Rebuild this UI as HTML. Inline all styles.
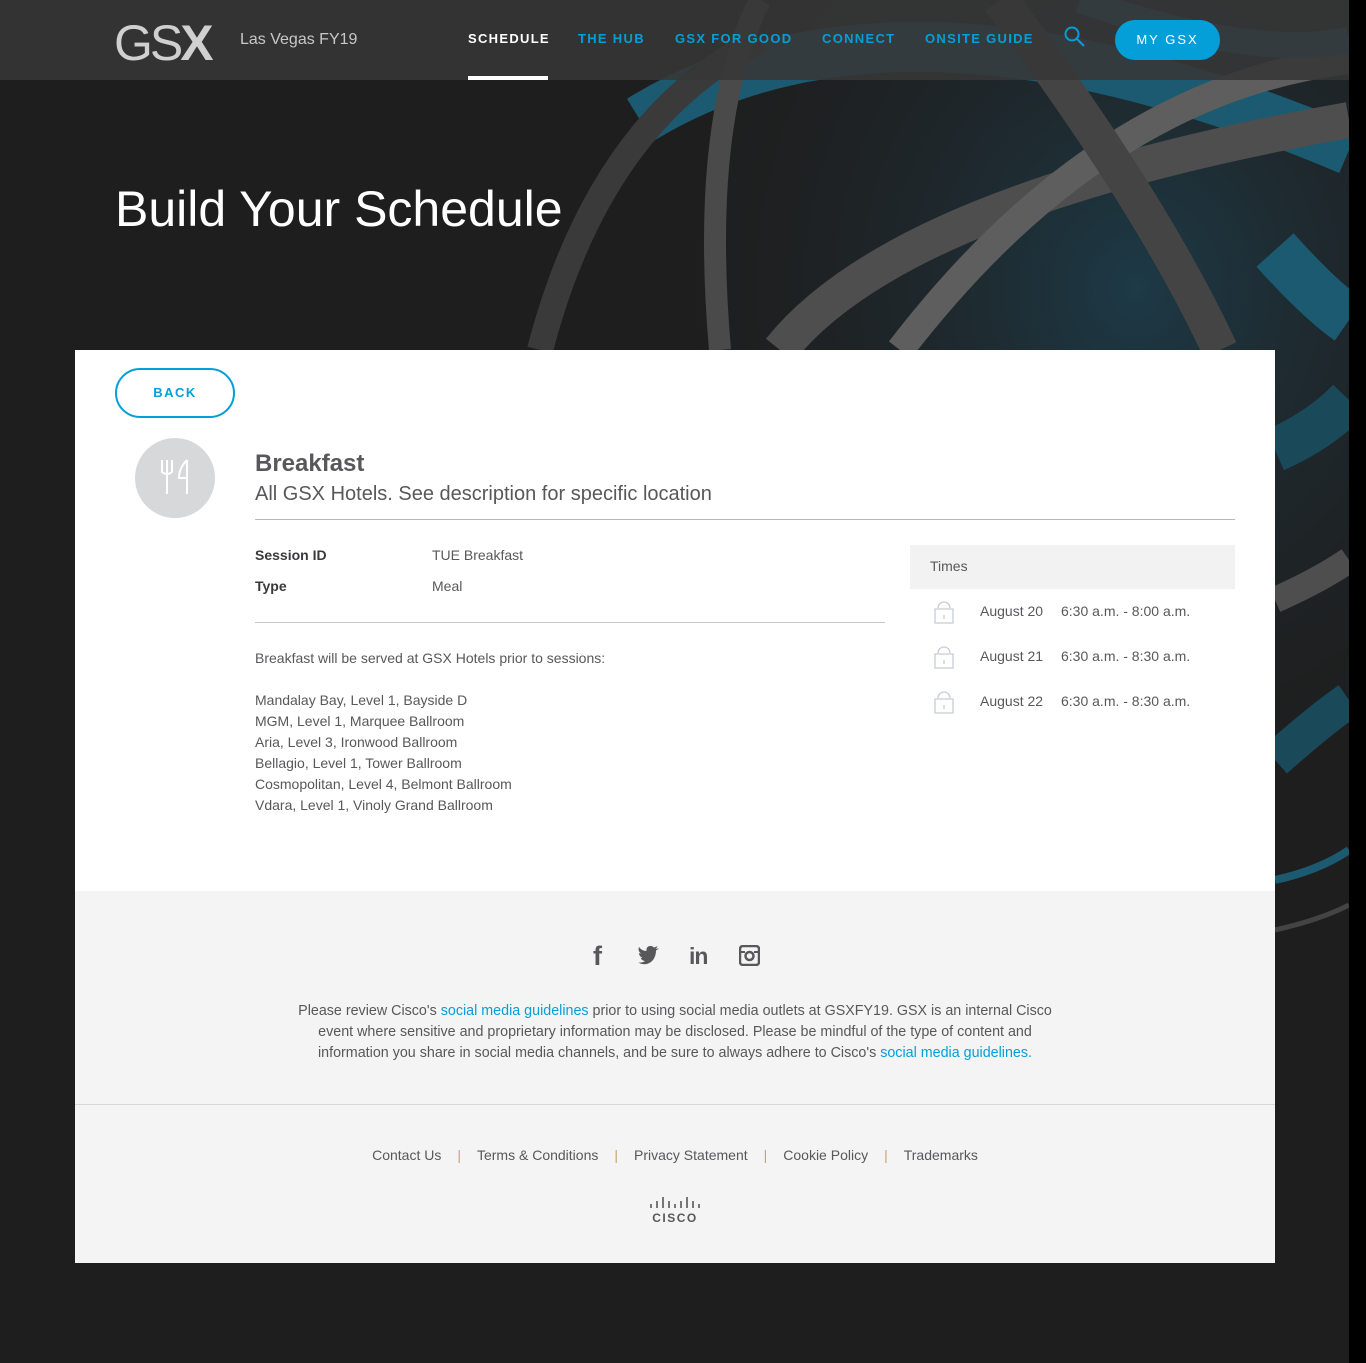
<!DOCTYPE html>
<html><head><meta charset="utf-8">
<style>
*{margin:0;padding:0;box-sizing:border-box}
body{width:1366px;height:1363px;background:#000;font-family:"Liberation Sans",sans-serif;position:relative;overflow:hidden}
#page{position:absolute;left:0;top:0;width:1349px;height:1363px;background:#1e1e1e;overflow:hidden}
#art{position:absolute;left:0;top:0}
#hdr{position:absolute;left:0;top:0;width:1349px;height:80px;background:rgba(55,55,55,0.88)}
.logo{position:absolute;left:114px;top:14px;font-size:50px;color:#d0d0d0;letter-spacing:-3px;font-weight:normal}
.logo b{font-weight:bold;letter-spacing:0}
.loc{position:absolute;left:240px;top:31px;font-size:16px;color:#c8c8c8}
.nav{position:absolute;top:31px;font-size:13px;font-weight:bold;letter-spacing:1.3px;color:#049fd9}
.nav.on{color:#fff}
.under{position:absolute;left:468px;top:76px;width:80px;height:4px;background:#fff}
.mygsx{position:absolute;left:1115px;top:20px;width:105px;height:40px;border-radius:20px;background:#049fd9;color:#fff;font-size:13px;letter-spacing:2px;text-align:center;line-height:40px}
h1{position:absolute;left:115px;top:180px;font-size:50px;font-weight:normal;color:#fff}
#card{position:absolute;left:75px;top:350px;width:1200px;height:541px;background:#fff}
.back{position:absolute;left:40px;top:18px;width:120px;height:50px;border:2px solid #049fd9;border-radius:25px;color:#049fd9;font-weight:bold;font-size:13px;letter-spacing:1.5px;text-align:center;line-height:46px}
.ico{position:absolute;left:60px;top:88px;width:80px;height:80px;border-radius:50%;background:#d7d8da}
.t{position:absolute;color:#58585b}
#foot{position:absolute;left:75px;top:891px;width:1200px;height:372px;background:#f4f4f4}
a{color:#049fd9;text-decoration:none}
.sep{color:#c9a070;margin:0 16px}
</style></head><body>
<div id="page">
<svg id="art" width="1349" height="960" viewBox="0 0 1349 960">
<defs><radialGradient id="g" cx="0.75" cy="0.3" r="0.6"><stop offset="0" stop-color="#1d3a47"/><stop offset="1" stop-color="#1e1e1e" stop-opacity="0"/></radialGradient></defs>
<rect x="500" y="0" width="849" height="960" fill="url(#g)"/>
<g fill="none" stroke-linecap="butt">
<path d="M640 120 Q900 -40 1349 150" stroke="#1b5a70" stroke-width="50"/>
<path d="M780 350 Q900 200 1349 120" stroke="#4e4e4e" stroke-width="36"/>
<path d="M900 350 Q1100 90 1349 60" stroke="#5e5e5e" stroke-width="28"/>
<path d="M540 350 Q600 120 760 40" stroke="#3a3a3a" stroke-width="26"/>
<path d="M720 350 Q700 120 760 0" stroke="#4a4a4a" stroke-width="22"/>
<path d="M1000 0 Q1150 200 1220 350" stroke="#444" stroke-width="36"/>
<path d="M1080 0 Q1250 60 1349 40" stroke="#1b5a70" stroke-width="26"/>
<path d="M1275 250 Q1320 300 1349 320" stroke="#1b5a70" stroke-width="50"/>
<path d="M1275 450 Q1320 430 1349 400" stroke="#1a4a5a" stroke-width="44"/>
<path d="M1275 600 Q1320 580 1349 560" stroke="#4e4e4e" stroke-width="26"/>
<path d="M1275 760 Q1320 720 1349 700" stroke="#1a4a5a" stroke-width="36"/>
<path d="M1275 880 Q1320 870 1349 850" stroke="#1b5a70" stroke-width="8"/>
<path d="M1275 930 Q1320 920 1349 905" stroke="#444" stroke-width="5"/>
</g>
</svg>
<div id="hdr">
<div class="logo">GS<b>X</b></div>
<div class="loc">Las Vegas FY19</div>
<div class="nav on" style="left:468px">SCHEDULE</div>
<div class="nav" style="left:578px">THE HUB</div>
<div class="nav" style="left:675px">GSX FOR GOOD</div>
<div class="nav" style="left:822px">CONNECT</div>
<div class="nav" style="left:925px">ONSITE GUIDE</div>
<svg style="position:absolute;left:1064px;top:26px" width="22" height="22"><circle cx="8" cy="8" r="6.5" fill="none" stroke="#049fd9" stroke-width="2"/><path d="M13 13 L20 20" stroke="#049fd9" stroke-width="2"/></svg>
<div class="under"></div>
<div class="mygsx">MY GSX</div>
</div>
<h1>Build Your Schedule</h1>
<div id="card">
<div class="back">BACK</div>
<div class="ico"><svg width="80" height="80"><g stroke="#fff" stroke-width="2" fill="none"><path d="M27 22 V34 Q32 38 37 34 V22 M32 22 V56"/><path d="M52 22 Q44 30 44 40 H52 V56 M52 22 V40"/></g></svg></div>
<div class="t" style="left:180px;top:100px;font-size:24px;font-weight:bold">Breakfast</div>
<div class="t" style="left:180px;top:133px;font-size:20px">All GSX Hotels. See description for specific location</div>
<div style="position:absolute;left:180px;top:169px;width:980px;height:1px;background:#b8b8b8"></div>
<div class="t" style="left:180px;top:197px;font-size:14px;font-weight:bold;color:#3a3a3c">Session ID</div>
<div class="t" style="left:357px;top:197px;font-size:14px">TUE Breakfast</div>
<div class="t" style="left:180px;top:228px;font-size:14px;font-weight:bold;color:#3a3a3c">Type</div>
<div class="t" style="left:357px;top:228px;font-size:14px">Meal</div>
<div style="position:absolute;left:180px;top:272px;width:630px;height:1px;background:#c8c8c8"></div>
<div class="t" style="left:180px;top:298px;font-size:14px;line-height:21px">Breakfast will be served at GSX Hotels prior to sessions:<br><br>Mandalay Bay, Level 1, Bayside D<br>MGM, Level 1, Marquee Ballroom<br>Aria, Level 3, Ironwood Ballroom<br>Bellagio, Level 1, Tower Ballroom<br>Cosmopolitan, Level 4, Belmont Ballroom<br>Vdara, Level 1, Vinoly Grand Ballroom</div>
<div style="position:absolute;left:835px;top:195px;width:325px;height:44px;background:#f2f2f2"></div>
<div class="t" style="left:855px;top:208px;font-size:14px">Times</div>
<div class="t" style="left:905px;top:239px;font-size:14px;line-height:45px">August 20<br>August 21<br>August 22</div>
<div class="t" style="left:986px;top:239px;font-size:14px;line-height:45px">6:30 a.m. - 8:00 a.m.<br>6:30 a.m. - 8:30 a.m.<br>6:30 a.m. - 8:30 a.m.</div>
<svg style="position:absolute;left:858px;top:248px" width="24" height="130"><g fill="none" stroke="#c3ccd4" stroke-width="1.3"><path d="M5 10 A6 6 0 0 1 17 10 M2 11 H20 V25 H2 Z M11 17 V21"/><path d="M5 55 A6 6 0 0 1 17 55 M2 56 H20 V70 H2 Z M11 62 V66"/><path d="M5 100 A6 6 0 0 1 17 100 M2 101 H20 V115 H2 Z M11 107 V111"/></g></svg>
</div>
<div id="foot">
<div style="position:absolute;left:518px;top:50px;font-size:27px;font-weight:bold;color:#58585b">f</div>
<svg style="position:absolute;left:563px;top:54px" width="22" height="20"><path d="M21 3 Q19 4 17.5 4 Q19 3 19.5 1 Q18 2 16 2.5 Q13 -0.5 9.5 2 Q8 4 8.5 6 Q4 6 1 2 Q-0.5 6 3 8.5 Q2 8.5 1 8 Q1 11.5 4.5 12.5 Q3.5 13 2.5 12.5 Q3.5 15.5 7 16 Q4 18 0 17.5 Q9 22 15 15 Q18 11 18 5.5 Q20 4.5 21 3Z" fill="#58585b"/></svg>
<div style="position:absolute;left:614px;top:52px;font-size:23px;font-weight:bold;color:#58585b;letter-spacing:-1px">in</div>
<svg style="position:absolute;left:664px;top:54px" width="21" height="21"><rect x="1" y="1" width="19" height="19" rx="3" fill="none" stroke="#58585b" stroke-width="2.5"/><circle cx="10.5" cy="11" r="4" fill="none" stroke="#58585b" stroke-width="2.5"/><path d="M1 7 H6 M15 7 H20" stroke="#58585b" stroke-width="2"/></svg>
<div style="position:absolute;left:0;top:110px;width:1200px;text-align:center;font-size:14.3px;line-height:21px;color:#58585b">Please review Cisco's <a>social media guidelines</a> prior to using social media outlets at GSXFY19. GSX is an internal Cisco<br>event where sensitive and proprietary information may be disclosed. Please be mindful of the type of content and<br>information you share in social media channels, and be sure to always adhere to Cisco's <a>social media guidelines.</a></div>
<div style="position:absolute;left:0;top:213px;width:1200px;height:1px;background:#d8d8d8"></div>
<div style="position:absolute;left:0;top:256px;width:1200px;text-align:center;font-size:14px;color:#58585b">Contact Us<span class="sep">|</span>Terms &amp; Conditions<span class="sep">|</span>Privacy Statement<span class="sep">|</span>Cookie Policy<span class="sep">|</span>Trademarks</div>
<svg style="position:absolute;left:574px;top:305px" width="52" height="14"><g stroke="#58585b" stroke-width="1.6"><path d="M2 8V12 M8 5V12 M14 1V12 M20 5V12 M26 8V12 M32 5V12 M38 1V12 M44 5V12 M50 8V12"/></g></svg>
<div style="position:absolute;left:0;top:320px;width:1200px;text-align:center;font-size:12px;font-weight:bold;letter-spacing:1.5px;color:#58585b">CISCO</div>
</div>
</div>
</body></html>
